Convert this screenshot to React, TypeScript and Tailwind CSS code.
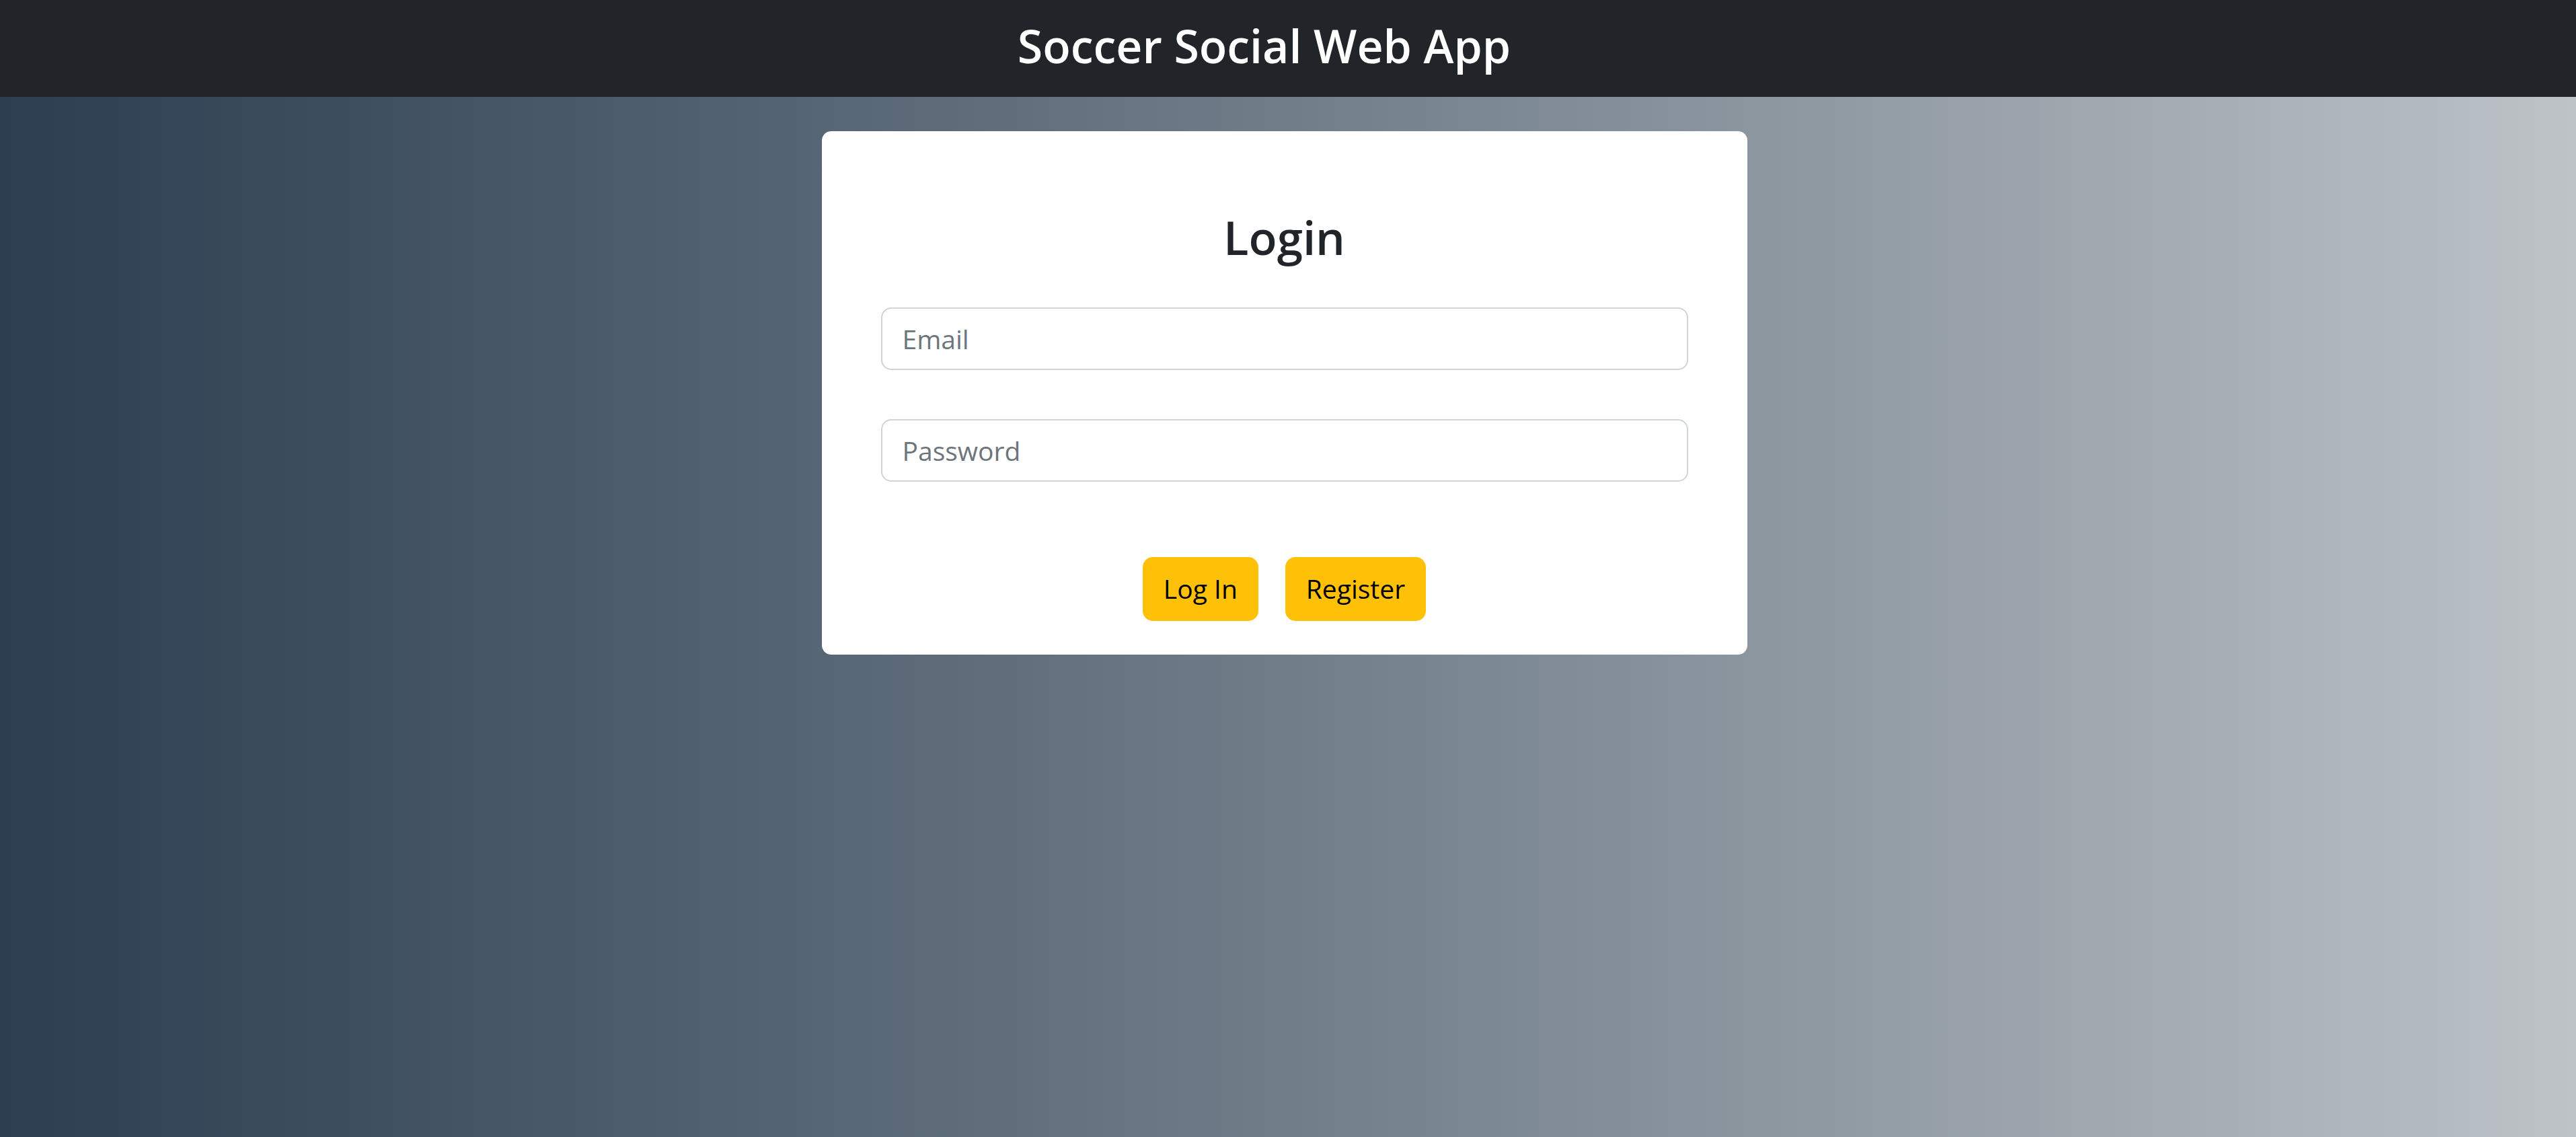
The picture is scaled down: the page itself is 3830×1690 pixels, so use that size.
export default function App() {
  return (
    <div className="min-h-screen bg-linear-to-r from-[#2c3e50] to-[#bdc3c7] font-['Open_Sans',sans-serif]">
      {/* Navbar */}
      <header className="h-[144px] bg-[#212529] flex items-center justify-center pr-[71px]">
        <h1 className="text-[68px] leading-[1.2] font-semibold text-white -mt-[8px]">Soccer Social Web App</h1>
      </header>

      {/* Login card */}
      <div className="flex justify-center pt-[51px] pr-[11px]">
        <div className="w-[1376px] bg-white rounded-[14px] px-[88px] pt-[116px] pb-[50px]">
          <h2 className="text-center text-[69px] leading-[1.2] font-semibold text-[#212529] mb-[63px]">Login</h2>

          <form className="flex flex-col" onSubmit={(e) => e.preventDefault()}>
            <input
              type="email"
              placeholder="Email"
              className="w-full h-[93px] border-2 border-[#ced4da] rounded-[15px] px-[30px] text-[39px] text-[#212529] placeholder:text-[#6c757d] outline-none"
            />
            <input
              type="password"
              placeholder="Password"
              className="w-full h-[93px] mt-[73px] border-2 border-[#ced4da] rounded-[15px] px-[30px] text-[39px] text-[#212529] placeholder:text-[#6c757d] outline-none"
            />

            <div className="flex justify-center gap-[40px] mt-[112px]">
              <button type="submit" className="h-[95px] px-[31px] rounded-[15px] bg-[#ffc107] text-black text-[39px]">
                Log In
              </button>
              <button type="button" className="h-[95px] px-[31px] rounded-[15px] bg-[#ffc107] text-black text-[39px]">
                Register
              </button>
            </div>
          </form>
        </div>
      </div>
    </div>
  )
}
